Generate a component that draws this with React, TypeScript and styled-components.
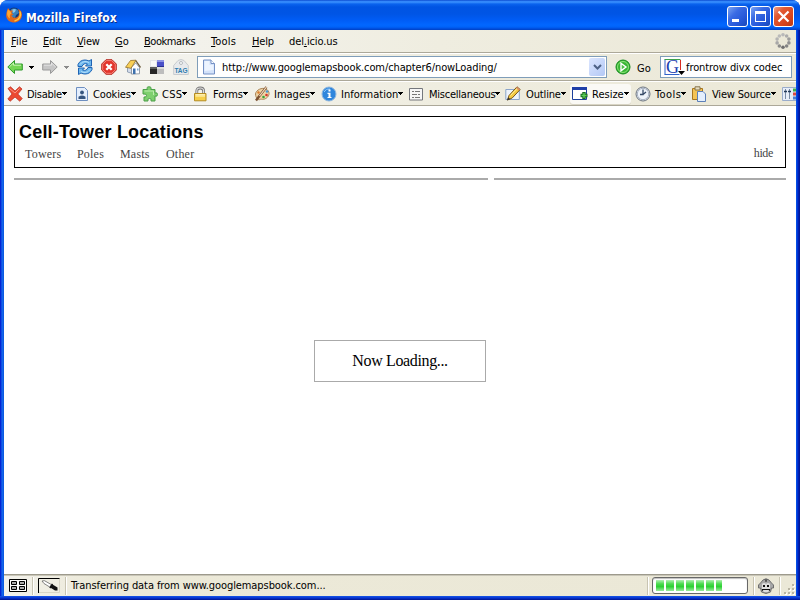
import React from "react";
import styled, { createGlobalStyle, css } from "styled-components";

const Global = createGlobalStyle`
  * { box-sizing: border-box; }
  body { margin: 0; background: #fff; overflow: hidden; }
`;

const Window = styled.div`
  width: 800px;
  height: 600px;
  display: flex;
  flex-direction: column;
  border-radius: 8px 8px 0 0;
  overflow: hidden;
  background: linear-gradient(90deg, #0019cf 0, #0831d9 1px, #166aee 2px, #0855dd 4px, #0855dd 796px, #0046e8 797px, #0024c0 798px, #00138c 800px);
  font: 11px/14px "DejaVu Sans Condensed", "DejaVu Sans", sans-serif;
  font-stretch: condensed;
  color: #000;
`;

const TitleBar = styled.header`
  height: 30px;
  flex: none;
  display: flex;
  align-items: center;
  padding: 3px 6px 0 6px;
  background: linear-gradient(180deg, #0842c8 0, #2a7df5 1px, #3c92ff 2px, #0a63ee 4px, #0054e3 7px, #0055e5 14px, #005cf5 20px, #0267ff 25px, #0062f8 27px, #004ad8 29px, #0040c0 30px);
`;

const AppIcon = styled.span`
  height: 16px;
  margin-bottom: 3px;
  svg { display: block; }
`;

const Caption = styled.h1`
  margin: 2px auto 0 4px;
  font: bold 12px/16px "DejaVu Sans Condensed", "DejaVu Sans", sans-serif;
  font-stretch: condensed;
  letter-spacing: 0.1px;
  color: #fff;
  text-shadow: 1px 1px 0 #0a2f8c;
`;

const CaptionButton = styled.span<{ $close?: boolean }>`
  width: 21px;
  height: 21px;
  margin-left: 2px;
  border: 1px solid #fff;
  border-radius: 3px;
  background: ${(p) =>
    p.$close
      ? "linear-gradient(135deg, #f0a088 0, #e25a34 30%, #d8441c 70%, #b83a14 100%)"
      : "linear-gradient(135deg, #7ba4f2 0, #3a6be4 35%, #2657d8 70%, #1a48b8 100%)"};
  svg { display: block; }
`;

const Client = styled.div`
  flex: 1;
  min-height: 0;
  margin: 0 4px;
  display: flex;
  flex-direction: column;
  background: #fff;
`;

const chrome = css`
  flex: none;
  display: flex;
  align-items: center;
  background: linear-gradient(90deg, #f6f6f4 0, #efede0 55%, #ebe8d7 100%);
  svg { flex: none; }
`;

const MenuBar = styled.nav`
  ${chrome}
  height: 23px;
  padding: 0 5px 0 7px;
  border-bottom: 1px solid #aca899;
`;

const MenuItem = styled.span<{ $w: number; $ls?: number }>`
  flex: 0 0 ${(p) => p.$w}px;
  padding-top: 2px;
  letter-spacing: ${(p) => p.$ls ?? 0}px;
  white-space: nowrap;
  u { text-underline-offset: 1px; text-decoration-thickness: 1px; text-decoration-skip-ink: none; }
`;

const Throbber = styled.span`
  margin-left: auto;
  height: 16px;
  svg { display: block; }
`;

const NavBar = styled.div`
  ${chrome}
  height: 28px;
  border-top: 1px solid #fff;
  border-bottom: 1px solid #aca899;
  padding-left: 3px;
`;

const NavSlot = styled.span<{ $w: number; $indent?: number }>`
  flex: 0 0 ${(p) => p.$w}px;
  height: 16px;
  display: flex;
  align-items: center;
  padding-left: ${(p) => p.$indent ?? 0}px;
`;

const carets = {
  width: 5,
  height: 3,
};

const CaretSvg = styled.svg`
  display: block;
  flex: none;
`;

const Caret = ({ muted }: { muted?: boolean }) => (
  <CaretSvg width={carets.width} height={carets.height} viewBox="0 0 5 3" shapeRendering="crispEdges">
    <path d="M0 0h5v1H4v1H3v1H2V2H1V1H0Z" fill={muted ? "#8a8a8a" : "#000"} />
  </CaretSvg>
);

const Field = styled.div<{ $w: number }>`
  flex: 0 0 ${(p) => p.$w}px;
  height: 22px;
  display: flex;
  align-items: center;
  background: #fff;
  border: 1px solid #7f9db9;
  padding: 0 1px 0 3px;
  white-space: nowrap;
`;

const FieldText = styled.span<{ $ls: number; $gap: number }>`
  margin: 2px auto 0 ${(p) => p.$gap}px;
  letter-spacing: ${(p) => p.$ls}px;
`;

const DropButton = styled.span`
  width: 16px;
  height: 18px;
  display: grid;
  place-items: center;
  border-radius: 2px;
  background: linear-gradient(135deg, #dce6ff, #b3c8f5);
`;

const GoLabel = styled.span`
  flex: 0 0 23px;
  margin-top: 3px;
`;

const DevBar = styled.div`
  ${chrome}
  height: 25px;
  border-top: 1px solid #fff;
  border-bottom: 1px solid #aca899;
  padding-left: 3px;
  overflow: hidden;
`;

const DevItem = styled.span<{ $w: number; $raised?: boolean }>`
  flex: 0 0 ${(p) => p.$w}px;
  height: 20px;
  display: flex;
  align-items: center;
  ${(p) =>
    p.$raised &&
    css`
      padding-left: 2px;
      margin-right: 4px;
      background: #faf9f5;
      border-radius: 3px;
      box-shadow: 0 1px 0 #d8d4c4;
    `}
`;

const DevLabel = styled.span<{ $gap: number; $ls: number }>`
  margin: 2px 0 0 ${(p) => p.$gap}px;
  letter-spacing: ${(p) => p.$ls}px;
  white-space: nowrap;
`;

const Page = styled.main`
  flex: 1;
  min-height: 0;
  display: flex;
  flex-direction: column;
  padding: 10px;
  font-family: "Liberation Serif", serif;
  font-stretch: normal;
`;

const SiteHeader = styled.section`
  flex: none;
  height: 52px;
  border: 1px solid #000;
  padding: 5px 12px 0 4px;
`;

const SiteTitle = styled.h2`
  margin: 0;
  font: bold 18px/20px "Liberation Sans", Arial, sans-serif;
  letter-spacing: 0.2px;
`;

const SiteNav = styled.div`
  display: flex;
  padding-left: 6px;
  font-size: 12px;
  line-height: 14px;
  margin-top: 5px;
  color: #444;
`;

const SiteLink = styled.span<{ $w: number }>`
  flex: 0 0 ${(p) => p.$w}px;
  letter-spacing: 0.2px;
`;

const HideLink = styled.span`
  margin: -1px 0 0 auto;
  letter-spacing: -0.35px;
`;

const Rules = styled.div`
  flex: none;
  display: grid;
  grid-template-columns: 474px 292px;
  gap: 6px;
  margin-top: 10px;
`;

const Rule = styled.div`
  height: 2px;
  background: #aaa;
`;

const LoadingBox = styled.div`
  width: 172px;
  height: 42px;
  margin: 160px auto 0;
  border: 1px solid #aaa;
  font-size: 16px;
  line-height: 40px;
  letter-spacing: -0.36px;
  text-align: center;
`;

const StatusBar = styled.footer`
  ${chrome}
  background: linear-gradient(90deg, #f3f2ec 0, #ece9d8 12%, #ebe8d7 100%);
  height: 22px;
  border-top: 1px solid #9d9a8c;
  box-shadow: inset 0 1px 0 #c9c6b8;
  padding-left: 5px;
`;

const Divider = styled.i<{ $left: number; $right: number }>`
  flex: none;
  width: 2px;
  height: 18px;
  margin: 1px ${(p) => p.$right}px 0 ${(p) => p.$left}px;
  border-left: 1px solid #c8c4b2;
  border-right: 1px solid #fff;
`;

const StatusText = styled.span`
  flex: 0 0 576px;
  letter-spacing: -0.08px;
`;

const Progress = styled.div`
  flex: none;
  width: 96px;
  height: 17px;
  display: flex;
  gap: 2px;
  padding: 2px 3px;
  border: 1px solid #686868;
  border-radius: 3px;
  background: #fff;
  box-shadow: inset 0 1px 1px #bebebe;
`;

const Chunk = styled.i<{ $w: number }>`
  flex: none;
  width: ${(p) => p.$w}px;
  height: 11px;
  background: linear-gradient(180deg, #b5f0b5 0, #4cdb50 35%, #2dd134 60%, #9beb9c 100%);
`;

const Grip = styled.span`
  align-self: flex-end;
  height: 12px;
  svg { display: block; }
`;

const BottomEdge = styled.div`
  flex: none;
  height: 4px;
  background: linear-gradient(180deg, #1656e8, #0633d0 50%, #00138c);
`;

type IconProps = { children: React.ReactNode; w?: number; h?: number };
const Icon = ({ children, w = 16, h = 16 }: IconProps) => (
  <svg width={w} height={h} viewBox={`0 0 ${w} ${h}`} fill="none">
    {children}
  </svg>
);

const FirefoxIcon = () => (
  <Icon>
    <circle cx="8" cy="7.6" r="7" fill="#123a7c" />
    <path d="M5 2.500q3-2 7 .5l1 3-3 2-1 3-3-1-2-3Z" fill="#3a80bb" />
    <path d="M6 3q2-1.500 4-.5L9 5 7 6Z" fill="#8cc6e8" />
    <path d="M2 1 4 3.500l3 0L5.500 6l2 1.500-2 1C7 12 12.500 11.500 13 7c.4-2-.5-4-1-5 4 1.500 4.500 5 3.500 8.500-1.500 4-6 5.700-9.500 4.700C1.500 14.300-.3 10.500.3 7 .5 4.500 1.500 2.500 2 1Z" fill="#e3691a" />
    <path d="M2 2.500c-1.500 3-1.300 7 2 9-.8-3 .5-4.500 1.500-5L4 4Z" fill="#ffa630" />
    <path d="M14 4.500c1.500 4-.5 8.500-5.500 9.500" stroke="#ffc640" strokeWidth="1.400" />
  </Icon>
);

const ArrowIcon = ({ forward }: { forward?: boolean }) => (
  <Icon>
    <g transform={forward ? "translate(16 0) scale(-1 1)" : undefined}>
      <path d="M.8 8 7.500 1.500V5h7.800v6H7.500v3.500Z" fill={forward ? "#c6c6c6" : "#74d653"} stroke={forward ? "#9a9a9a" : "#2f9a2c"} />
      <path d="M2.500 7.800 6.500 4v2.200h7.500" stroke={forward ? "#e4e4e4" : "#c9f5b6"} />
    </g>
  </Icon>
);

const ReloadIcon = () => (
  <Icon>
    <path d="M1 7.500V5.500Q3 1 8 1q2 0 4 1L14.500.5V7H8.500l2-2Q6.500 3.500 5 7.500Z" fill="#6fb8ee" stroke="#1d63b4" />
    <path d="M15 8.500v2Q13 15 8 15q-2 0-4-1l-2.500 1.500V9H7.500l-2 2Q9.500 12.500 11 8.500Z" fill="#6fb8ee" stroke="#1d63b4" />
    <path d="M3 5.500Q5 2.500 8 2.500q2 0 4 1M13 10.500Q11 13.500 8 13.500q-2 0-4-1" stroke="#b5defa" />
  </Icon>
);

const StopIcon = () => (
  <Icon>
    <path d="M5 .7h6L15.300 5v6L11 15.300H5L.7 11V5Z" fill="#e2352c" stroke="#b8332a" />
    <path d="M5.300 1.600h5.400l3.600 3.700v5.400l-3.600 3.600H5.300l-3.600-3.600V5.300Z" stroke="#f58378" />
    <path d="m5.300 5.300 5.400 5.400m0-5.400-5.400 5.400" stroke="#fff" strokeWidth="2.300" />
  </Icon>
);

const HomeIcon = () => (
  <Icon>
    <path d="M2.500 8h5v6.500l-5-1.500Z" fill="#d3dceb" stroke="#8090a6" strokeWidth=".8" />
    <path d="M6.500 8 10.800 4l3.700 4.500v6.300l-8 .3Z" fill="#fdfdff" stroke="#7b8796" strokeWidth=".8" />
    <path d="M.5 8.300 5.500 1.500l5.500-.3L6 9.300Z" fill="#f8cf56" stroke="#94712a" strokeWidth=".8" />
    <path d="m10.700 1.500 4.800 7" stroke="#6b5a3a" strokeWidth="1.300" />
    <path d="M8 9.500h2.500V15H8Z" fill="#3d70ac" />
    <path d="M12 9.500h1.500v2H12Z" fill="#78a5d2" />
  </Icon>
);

const DeliciousIcon = () => (
  <svg width="16" height="16" viewBox="0 0 16 16" shapeRendering="crispEdges">
    <path d="M1 1h14v14H1Z" fill="#fff" />
    <path d="M1 1h7v7H1Z" fill="#e4e4e8" />
    <path d="M2 2h5v5H2Z" fill="#f8f8f8" />
    <path d="M8 1h7v7H8Z" fill="#4a50c8" />
    <path d="M8 1h7v2H8Z" fill="#8c92e4" />
    <path d="M8 7h7v1H8Z" fill="#2a2f90" />
    <path d="M1 8h7v7H1Z" fill="#262626" />
    <path d="M1 8h7v2H1Z" fill="#5c5c5c" />
    <path d="M8 8h7v7H8Z" fill="#bdbdbd" />
    <path d="M8 8h7v2H8Z" fill="#dcdcdc" />
  </svg>
);

const TagText = styled.text`
  font: bold 6.500px "Liberation Sans", sans-serif;
  fill: #2f7cae;
`;

const TagIcon = () => (
  <Icon>
    <path d="M.7 15.500V6.500L5 1.500Q8-.5 11 1.500l4.300 5v9Z" fill="#e8eaec" stroke="#c8cccf" />
    <circle cx="8" cy="4" r="1.500" fill="#fff" stroke="#b5babd" />
    <TagText x="1.500" y="14" textLength="13">TAG</TagText>
  </Icon>
);

const PageIcon = () => (
  <Icon>
    <path d="M2.500 1h7.500l3.500 3.500V15h-11Z" fill="#d3e2fa" stroke="#7591c5" />
    <path d="M3.500 2h5v4h4v5l-9 1Z" fill="#edf4ff" />
    <path d="M10 1v3.500h3.500" fill="#fff" stroke="#7591c5" />
  </Icon>
);

const GoIcon = () => (
  <Icon>
    <circle cx="8" cy="8" r="7" fill="#38b535" stroke="#168b1e" />
    <circle cx="8" cy="8" r="5.500" stroke="#8ce477" />
    <path d="M6 4.200 11 8l-5 3.800Z" fill="#4fc048" stroke="#fff" strokeWidth="1.400" />
  </Icon>
);

const GoogleLetter = styled.text`
  font: 18px "Liberation Serif", serif;
  fill: #1b3fb0;
`;

const GoogleIcon = () => (
  <Icon w={21} h={18}>
    <path d="M1 16.500V1.500" stroke="#3061c8" />
    <path d="M.5 1.500h16" stroke="#3ca04a" />
    <path d="M16.500 2v10" stroke="#d82c20" />
    <path d="M.5 16.500h15" stroke="#3061c8" />
    <GoogleLetter x="2" y="15">G</GoogleLetter>
    <path d="M14 13h7l-3.500 4Z" fill="#000" />
  </Icon>
);

const DisableIcon = () => (
  <Icon>
    <path d="M1 2.500 3.500.8 8 5l4.500-4.200L15 3l-4.200 5 4.400 4.500-2.400 2.700L8 11l-4.800 4.200L.8 13 5 8Z" fill="#ec4a31" stroke="#c0392a" strokeWidth=".8" />
    <path d="m2.500 2.500 5.500 4.500 4.500-4.500" stroke="#f89784" />
  </Icon>
);

const CookieIcon = () => (
  <Icon>
    <path d="M2.500 1.500h8l3 3v10h-11Z" fill="#e5effd" stroke="#6e8fc0" />
    <circle cx="8" cy="6.500" r="1.900" fill="#36557f" />
    <path d="M4.500 13V10.800Q8 8 11.500 10.800V13Z" fill="#36557f" />
  </Icon>
);

const PuzzleIcon = () => (
  <Icon>
    <path d="M1 3.500h4.500Q4 .8 7 .8t1.800 2.700H13V7q2.500-1 2.500 1.500T13 10v5H9q1-2.500-1.500-2.500T6 15H2v-4q2.500.5 2.500-1.500T1 8Z" fill="#7fd06f" stroke="#4a9f48" />
    <path d="M2.500 5h9v4" stroke="#bdecae" />
  </Icon>
);

const LockIcon = () => (
  <Icon>
    <path d="M3.800 8V5Q3.800 2 7.200 2t3.400 3v3" stroke="#777" strokeWidth="2.800" />
    <path d="M3.800 8V5Q3.800 2 7.200 2t3.400 3v3" stroke="#dcdcdc" strokeWidth="1.200" />
    <path d="M1.500 7.500h11.500v7.300H1.500Z" fill="#f6cf49" stroke="#b58c22" />
    <path d="M2.500 8.700h9.500M2.500 10h9.500" stroke="#fff6c4" />
  </Icon>
);

const PaletteIcon = () => (
  <Icon>
    <path d="M1.500 8C2 4 8 1 12 3s4 6.500.5 9-5 .5-6.500 1.500S1.500 12 1.500 8Z" fill="#efd5a6" stroke="#a98455" />
    <circle cx="4.500" cy="6.500" r="1.200" fill="#dc7a2a" />
    <circle cx="13" cy="5.500" r="1.300" fill="#4a9bd6" />
    <circle cx="12.500" cy="9" r="1.300" fill="#d6352c" />
    <circle cx="9.500" cy="11" r="1.300" fill="#38a338" />
    <path d="m2 14.500 3-4L12.500 1" stroke="#7c5131" strokeWidth="2.400" />
    <path d="m5.500 10 7-9" stroke="#f8e2c4" strokeWidth="1.200" />
  </Icon>
);

const InfoIcon = () => (
  <Icon>
    <circle cx="8" cy="8" r="7" fill="#2f86dc" stroke="#8eb6de" />
    <path d="M3 6Q5 2 9 3" stroke="#92c9f9" />
    <path d="M7.500 3.500h2v2h-2ZM6.500 6.800h3V11h1v1h-4v-1h1V8h-1Z" fill="#fff" />
  </Icon>
);

const ListIcon = () => (
  <Icon>
    <path d="M1.500 2.500h13v11.500h-13Z" fill="#f6f6f6" stroke="#74777c" />
    <path d="M4 5.500h2m1 0h5M4 8.500h5m1 0h2M4 11.500h2m1 0h5" stroke="#777" />
  </Icon>
);

const PencilIcon = () => (
  <Icon>
    <path d="M.8 3.500h13.500v10H.8Z" fill="#eef4fc" stroke="#8ba5ca" />
    <path d="M2.500 14 4 9.500 12 .8l3.200 2.700-8 8.500Z" fill="#f5cb43" stroke="#78561b" />
    <path d="m2 14.500 1.200-3.300 2.200 2Z" fill="#333" />
    <path d="m5.500 9.500 7-7.500" stroke="#fff1a2" />
    <path d="m11.500 1.500 3 2.500" stroke="#dc8a6e" strokeWidth="1.500" />
  </Icon>
);

const ResizeIcon = () => (
  <Icon>
    <path d="M.5 1.500h14v12H.5Z" fill="#fff" stroke="#1b3f9c" />
    <path d="M0 1h15v3H0Z" fill="#1f3fa8" />
    <path d="M8.500 9.500h7M12 6v7" stroke="#176d1e" strokeWidth="3.400" />
    <path d="M9.500 9.500h5M12 7v5" stroke="#5cd05a" strokeWidth="1.300" />
  </Icon>
);

const ClockIcon = () => (
  <Icon>
    <circle cx="8" cy="8" r="7" fill="#eef3fa" stroke="#69717c" />
    <circle cx="8" cy="8" r="5.700" stroke="#a7b1c2" />
    <path d="M8 3.500V8.500H5M8 8.500 11 6" stroke="#344866" strokeWidth="1.300" />
  </Icon>
);

const ClipboardIcon = () => (
  <Icon>
    <path d="M1.500 2.500h10v11h-10Z" fill="#f4c455" stroke="#a8761e" />
    <path d="M4 .8h5V4H4Z" fill="#e4dcc0" stroke="#86744c" />
    <path d="M6.500 5.500h5.500l2.500 2.500v7.500h-8Z" fill="#e4effd" stroke="#5c80b9" />
  </Icon>
);

const SlidersIcon = () => (
  <Icon>
    <path d="M.5 1.500h16v13H.5Z" fill="#e6edf8" stroke="#9aaccb" />
    <path d="M3.500 3v10M7.500 3v10" stroke="#5a6f8c" strokeWidth=".8" />
    <path d="M2 5.500h3M6 5.500h3" stroke="#233a58" strokeWidth="1.300" />
    <path d="M11 2.500h3v3h-3Z" fill="#3fae4e" />
    <path d="M11 6.500h3v3h-3Z" fill="#d64a42" />
    <path d="M11 10.500h3v3h-3Z" fill="#4a7ed0" />
  </Icon>
);

const ThrobberIcon = () => (
  <Icon>
    {["#6f6f6f", "#858585", "#909090", "#9c9c9c", "#acacac", "#b8b8b8", "#bababa", "#b4b4b4", "#a8a8a8", "#8c8c8c"].map((c, i) => {
      const a = Math.PI / 2 - (i * Math.PI) / 5;
      return <circle key={i} cx={8 + 6.2 * Math.cos(a)} cy={8 + 6.2 * Math.sin(a)} r="1.800" fill={c} />;
    })}
  </Icon>
);

const GridIcon = () => (
  <Icon w={18} h={13}>
    <path d="M.5.500h17v12H.5Z" fill="#fff" stroke="#000" />
    <path d="M2.500 2.500h5v3h-5Zm8 0h5v3h-5ZM2.500 7.500h5v3h-5Zm8 0h5v3h-5Z" fill="#aaa" stroke="#000" />
  </Icon>
);

const DropperIcon = () => (
  <Icon w={22} h={15}>
    <path d="M21.500 0v14.500H1" stroke="#d8d5c6" />
    <path d="M.5 15V.5H21.500" stroke="#000" />
    <path d="m4 3 2.500-.3 7 4-1.500 2.500L6 5.500Z" fill="#fff" stroke="#666" strokeWidth=".8" />
    <path d="m12.500 8 2-1.500 5 3v3h-2.500l-4-2.500Z" fill="#111" />
    <path d="m12 10 2.500-4" stroke="#111" strokeWidth="1.500" />
  </Icon>
);

const MonkeyIcon = () => (
  <Icon>
    <path d="M5 2Q8-.5 11 2l2.500 3 2 2v3h-2l-1 4-4.500 1.500L3.500 14l-1-4h-2V7l2-2Z" fill="#a7a7a7" stroke="#6e6e6e" />
    <path d="M4 6q2-2 4 0 2-2 4 0v6l-2 2H6l-2-2Z" fill="#dedede" />
    <path d="M5 7h2v2H5Zm4 0h2v2H9Z" fill="#111" />
    <path d="M4.500 12.800V11.500h7v1.300" stroke="#111" strokeWidth="1.200" />
    <path d="m7 1 1 3 1-3" stroke="#555" />
  </Icon>
);

const GripIcon = () => (
  <Icon w={12} h={12}>
    {[[8, 0], [4, 4], [8, 4], [0, 8], [4, 8], [8, 8]].map(([x, y]) => (
      <g key={`${x}-${y}`}>
        <rect x={x + 1} y={y + 1} width="2" height="2" fill="#fff" />
        <rect x={x} y={y} width="2" height="2" fill="#b8b4a2" />
      </g>
    ))}
  </Icon>
);

const devTools = [
  { label: "Disable", w: 67, gap: 4, ls: -0.28, icon: <DisableIcon /> },
  { label: "Cookies", w: 68, gap: 3, ls: -0.14, icon: <CookieIcon /> },
  { label: "CSS", w: 51, gap: 4, ls: 0.3, icon: <PuzzleIcon /> },
  { label: "Forms", w: 61, gap: 4, ls: 0, icon: <LockIcon /> },
  { label: "Images", w: 67, gap: 4, ls: 0, icon: <PaletteIcon /> },
  { label: "Information", w: 87, gap: 4, ls: 0, icon: <InfoIcon /> },
  { label: "Miscellaneous", w: 97, gap: 5, ls: -0.23, icon: <ListIcon /> },
  { label: "Outline", w: 65, gap: 5, ls: -0.14, icon: <PencilIcon /> },
  { label: "Resize", w: 61, gap: 4, ls: 0, icon: <ResizeIcon />, raised: true },
  { label: "Tools", w: 56, gap: 4, ls: 0.4, icon: <ClockIcon /> },
  { label: "View Source", w: 91, gap: 5, ls: -0.18, icon: <ClipboardIcon /> },
];

export default function App() {
  return (
    <>
      <Global />
      <Window>
        <TitleBar>
          <AppIcon><FirefoxIcon /></AppIcon>
          <Caption>Mozilla Firefox</Caption>
          <CaptionButton>
            <Icon w={19} h={19}><path d="M4 12h7v3H4Z" fill="#fff" /></Icon>
          </CaptionButton>
          <CaptionButton>
            <Icon w={19} h={19}><path d="M4 4h11v11H4Zm1 3v7h9V7Z" fill="#fff" fillRule="evenodd" /></Icon>
          </CaptionButton>
          <CaptionButton $close>
            <Icon w={19} h={19}><path d="m4.500 4.500 10 10m0-10-10 10" stroke="#fff" strokeWidth="2.200" /></Icon>
          </CaptionButton>
        </TitleBar>
        <Client>
          <MenuBar>
            <MenuItem $w={32}><u>F</u>ile</MenuItem>
            <MenuItem $w={34} $ls={-0.2}><u>E</u>dit</MenuItem>
            <MenuItem $w={38} $ls={-0.2}><u>V</u>iew</MenuItem>
            <MenuItem $w={29}><u>G</u>o</MenuItem>
            <MenuItem $w={67} $ls={-0.45}><u>B</u>ookmarks</MenuItem>
            <MenuItem $w={41} $ls={0.15}><u>T</u>ools</MenuItem>
            <MenuItem $w={37} $ls={-0.2}><u>H</u>elp</MenuItem>
            <MenuItem $w={60} $ls={-0.1}>del<u>.</u>icio.us</MenuItem>
            <Throbber><ThrobberIcon /></Throbber>
          </MenuBar>
          <NavBar>
            <NavSlot $w={21}><ArrowIcon /></NavSlot>
            <NavSlot $w={13} $indent={1}><Caret /></NavSlot>
            <NavSlot $w={22} $indent={1}><ArrowIcon forward /></NavSlot>
            <NavSlot $w={14} $indent={1}><Caret muted /></NavSlot>
            <NavSlot $w={24}><ReloadIcon /></NavSlot>
            <NavSlot $w={24}><StopIcon /></NavSlot>
            <NavSlot $w={24}><HomeIcon /></NavSlot>
            <NavSlot $w={24}><DeliciousIcon /></NavSlot>
            <NavSlot $w={24}><TagIcon /></NavSlot>
            <Field $w={410}>
              <PageIcon />
              <FieldText $gap={5} $ls={-0.1}>http://www.googlemapsbook.com/chapter6/nowLoading/</FieldText>
              <DropButton>
                <Icon w={9} h={6}><path d="m1 1 3.500 3.500L8 1" stroke="#4d6185" strokeWidth="2" /></Icon>
              </DropButton>
            </Field>
            <NavSlot $w={30} $indent={8}><GoIcon /></NavSlot>
            <GoLabel>Go</GoLabel>
            <Field $w={132}>
              <GoogleIcon />
              <FieldText $gap={1} $ls={-0.08}>frontrow divx codec</FieldText>
            </Field>
          </NavBar>
          <DevBar>
            {devTools.map((t) => (
              <DevItem key={t.label} $w={t.w} $raised={t.raised}>
                {t.icon}
                <DevLabel $gap={t.gap} $ls={t.ls}>{t.label}</DevLabel>
                <Caret />
              </DevItem>
            ))}
            <SlidersIcon />
          </DevBar>
          <Page>
            <SiteHeader>
              <SiteTitle>Cell-Tower Locations</SiteTitle>
              <SiteNav>
                <SiteLink $w={52}>Towers</SiteLink>
                <SiteLink $w={43}>Poles</SiteLink>
                <SiteLink $w={46}>Masts</SiteLink>
                <SiteLink $w={40}>Other</SiteLink>
                <HideLink>hide</HideLink>
              </SiteNav>
            </SiteHeader>
            <Rules>
              <Rule />
              <Rule />
            </Rules>
            <LoadingBox>Now Loading...</LoadingBox>
          </Page>
          <StatusBar>
            <GridIcon />
            <Divider $left={5} $right={4} />
            <DropperIcon />
            <Divider $left={5} $right={4} />
            <StatusText>Transferring data from www.googlemapsbook.com...</StatusText>
            <Divider $left={0} $right={3} />
            <Progress>
              {[8, 8, 8, 8, 8, 8, 6].map((w, i) => <Chunk key={i} $w={w} />)}
            </Progress>
            <Divider $left={5} $right={3} />
            <MonkeyIcon />
            <Divider $left={5} $right={3} />
            <Grip><GripIcon /></Grip>
          </StatusBar>
        </Client>
        <BottomEdge />
      </Window>
    </>
  );
}
